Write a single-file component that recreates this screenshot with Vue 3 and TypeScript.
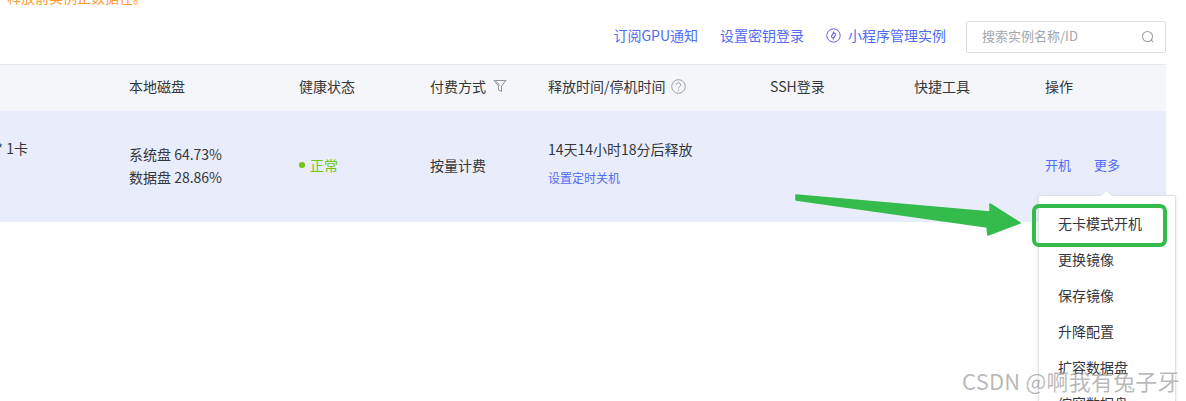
<script setup lang="ts">
interface Column {
  key: string;
  label: string;
}

const columns: Column[] = [
  { key: "lead", label: "" },
  { key: "disk", label: "本地磁盘" },
  { key: "health", label: "健康状态" },
  { key: "pay", label: "付费方式" },
  { key: "release", label: "释放时间/停机时间" },
  { key: "ssh", label: "SSH登录" },
  { key: "tools", label: "快捷工具" },
  { key: "ops", label: "操作" },
];

const menuItems = ["无卡模式开机", "更换镜像", "保存镜像", "升降配置", "扩容数据盘", "缩容数据盘"];
</script>

<template>
  <div class="page">
    <div class="notice">释放前实例正数据在。</div>

    <div class="toolbar">
      <a class="link">订阅GPU通知</a>
      <a class="link">设置密钥登录</a>
      <a class="link mini">
        <svg viewBox="0 0 15 15" width="15" height="15" fill="none" stroke="#6a5ff0" stroke-width="1">
          <circle cx="7.5" cy="7.5" r="6.7" />
          <path d="M6 3.8v4.8a1.4 1.4 0 0 0 2.8 0V6.6M9 11.2V6.4a1.4 1.4 0 0 0-2.8 0v1.5" transform="rotate(30 7.5 7.5)" />
        </svg>
        小程序管理实例
      </a>
      <div class="search">
        <span class="placeholder">搜索实例名称/ID</span>
        <svg viewBox="0 0 14 14" width="14" height="14" fill="none" stroke="#9a9ea6" stroke-width="1.1">
          <circle cx="6.5" cy="6.5" r="5" />
          <path d="M10.2 10.2l2 2" />
        </svg>
      </div>
    </div>

    <div class="table">
      <div class="row head">
        <div v-for="col in columns" :key="col.key" class="cell">
          {{ col.label }}
          <svg v-if="col.key === 'pay'" class="filter" viewBox="0 0 14 14" width="14" height="14" fill="none" stroke="#8f9297" stroke-width="1">
            <path d="M1 1.5h12L8.5 7v5.5l-3-1.5V7z" />
            <path d="M3.5 2.5l3 4" />
          </svg>
          <svg v-if="col.key === 'release'" class="help" viewBox="0 0 15 15" width="15" height="15" fill="none" stroke="#9a9da3" stroke-width="1">
            <circle cx="7.5" cy="7.5" r="6.8" />
            <path d="M5.3 5.9a2.2 2.2 0 1 1 3.3 1.9c-.8.4-1.1.8-1.1 1.6" />
            <path d="M7.5 10.4v1.2" />
          </svg>
        </div>
      </div>

      <div class="row body">
        <div class="cell lead"><span>* 1卡</span></div>
        <div class="cell disk">
          <div>系统盘 64.73%</div>
          <div>数据盘 28.86%</div>
        </div>
        <div class="cell health"><i class="dot"></i>正常</div>
        <div class="cell">按量计费</div>
        <div class="cell release">
          <div>14天14小时18分后释放</div>
          <a class="link small">设置定时关机</a>
        </div>
        <div class="cell"></div>
        <div class="cell"></div>
        <div class="cell ops">
          <a class="link">开机</a>
          <a class="link">更多</a>
        </div>
      </div>
    </div>

    <div class="menu">
      <div v-for="item in menuItems" :key="item" class="menu-item">{{ item }}</div>
    </div>

    <div class="mark-box"></div>
    <svg class="mark-arrow" viewBox="0 0 240 50" width="240" height="50">
      <path d="M1 5L195 22L195 14L225 33L193 45L192 37L1 10Z" fill="#34bb4c" stroke="#34bb4c" stroke-width="1.5" stroke-linejoin="round" />
    </svg>

    <div class="watermark">CSDN @啊我有兔子牙</div>
  </div>
</template>

<style scoped>
.page {
  position: relative;
  width: 1186px;
  height: 401px;
  overflow: hidden;
  background: #fff;
  font-family: "Noto Sans CJK SC", "Liberation Sans", sans-serif;
  font-size: 14px;
  color: #33363c;
}
.notice {
  height: 8px;
  margin-top: -3px;
  padding-left: 7px;
  font-size: 14px;
  line-height: 0;
  color: #ff9a2e;
}
.toolbar {
  display: flex;
  align-items: center;
  justify-content: flex-end;
  gap: 22px;
  width: 1166px;
  height: 59px;
  padding-top: 1px;
  box-sizing: border-box;
}
.link {
  color: #4f6cf6;
}
.mini {
  display: flex;
  align-items: center;
  gap: 7px;
}
.search {
  display: flex;
  align-items: center;
  justify-content: space-between;
  box-sizing: border-box;
  width: 200px;
  height: 32px;
  margin-top: 4px;
  margin-left: -2px;
  padding: 0 10px 0 15px;
  border: 1px solid #dcdee3;
  border-radius: 2px;
  font-size: 13px;
  color: #a3a6ab;
}
.placeholder {
  padding-bottom: 3px;
}
.table {
  width: 1166px;
}
.row {
  display: grid;
  grid-template-columns: 129px 170px 131px 118px 222px 144px 131px 121px;
  align-items: center;
  box-sizing: border-box;
}
.head {
  height: 47px;
  padding-bottom: 4px;
  background: #f5f6fa;
  border-top: 1px solid #e8e9ee;
}
.body {
  height: 111px;
  padding-bottom: 4px;
  background: #e9edfb;
}
.cell {
  display: flex;
  align-items: center;
  white-space: nowrap;
}
.filter {
  margin-left: 7px;
  margin-top: -1px;
}
.help {
  margin-left: 5px;
}
.lead {
  justify-content: flex-end;
  padding-right: 101px;
  margin-top: -33px;
  overflow: hidden;
}
.disk {
  display: block;
  margin-top: 2px;
  line-height: 23px;
}
.health {
  color: #70c80f;
  gap: 5px;
}
.dot {
  width: 6px;
  height: 6px;
  border-radius: 50%;
  background: #70c80f;
}
.release {
  display: block;
}
.release > div {
  line-height: 20px;
  margin-top: -4px;
  margin-bottom: 10px;
}
.small {
  display: block;
  font-size: 12px;
  line-height: 18px;
}
.ops {
  gap: 23px;
  font-size: 13px;
}
.menu {
  position: absolute;
  left: 1038px;
  top: 195px;
  width: 138px;
  padding-top: 9px;
  background: #fff;
  border: 1px solid #e0e1e6;
  border-radius: 2px;
  box-shadow: 0 1px 4px rgba(40, 50, 80, 0.12);
  box-sizing: border-box;
}
.menu::before {
  content: "";
  position: absolute;
  left: 63px;
  top: -5px;
  width: 8px;
  height: 8px;
  background: #fff;
  border-left: 1px solid #e0e1e6;
  border-top: 1px solid #e0e1e6;
  transform: rotate(45deg);
}
.menu-item {
  height: 36px;
  line-height: 36px;
  padding-left: 19px;
}
.mark-box {
  position: absolute;
  left: 1032px;
  top: 204px;
  width: 135px;
  height: 43px;
  box-sizing: border-box;
  border: 4px solid #34bb4c;
  border-radius: 7px;
}
.mark-arrow {
  position: absolute;
  left: 795px;
  top: 190px;
}
.watermark {
  position: absolute;
  left: 962px;
  top: 366px;
  font-size: 22px;
  line-height: 28px;
  letter-spacing: 0.2px;
  white-space: nowrap;
  color: rgba(125, 125, 125, 0.55);
  text-shadow: 1px 1px 1px rgba(255, 255, 255, 0.6);
}
</style>
